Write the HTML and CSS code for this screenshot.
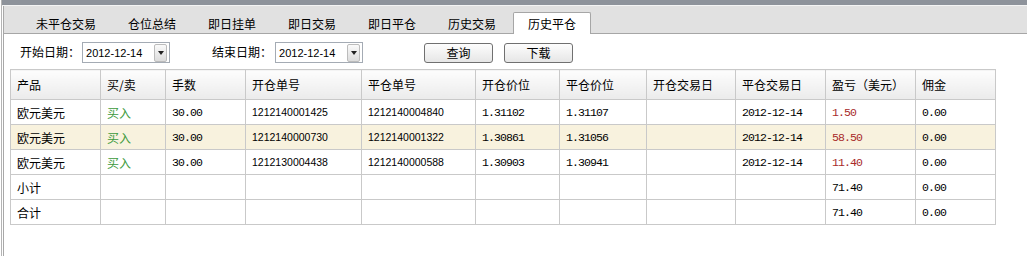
FILE: index.html
```html
<!DOCTYPE html>
<html lang="zh">
<head>
<meta charset="utf-8">
<title>历史平仓</title>
<link rel="stylesheet" href="styles.css">
</head>
<body>
<div class="frame">
  <div class="topbar"></div>
  <div class="tabs">
    <div class="tab">未平仓交易</div>
    <div class="tab">仓位总结</div>
    <div class="tab">即日挂单</div>
    <div class="tab">即日交易</div>
    <div class="tab">即日平仓</div>
    <div class="tab">历史交易</div>
    <div class="tab active">历史平仓</div>
  </div>
  <div class="filters">
    <span class="label">开始日期：</span>
    <div class="select"><span class="sel-text">2012-12-14</span><span class="sel-btn"><span class="tri"></span></span></div>
    <span class="label label2">结束日期：</span>
    <div class="select select2"><span class="sel-text">2012-12-14</span><span class="sel-btn"><span class="tri"></span></span></div>
    <button class="btn btn-query">查询</button>
    <button class="btn btn-down">下载</button>
  </div>
  <table class="grid">
    <colgroup>
      <col class="c1"><col class="c2"><col class="c3"><col class="c4"><col class="c5"><col class="c6"><col class="c7"><col class="c8"><col class="c9"><col class="c10"><col class="c11">
    </colgroup>
    <thead>
      <tr>
        <th>产品</th><th>买/卖</th><th>手数</th><th>开仓单号</th><th>平仓单号</th><th>开仓价位</th><th>平仓价位</th><th>开仓交易日</th><th>平仓交易日</th><th>盈亏（美元）</th><th>佣金</th>
      </tr>
    </thead>
    <tbody>
      <tr>
        <td>欧元美元</td><td class="buy">买入</td><td class="num">30.00</td><td class="id">1212140001425</td><td class="id">1212140004840</td><td class="num">1.31102</td><td class="num">1.31107</td><td></td><td class="num">2012-12-14</td><td class="num red">1.50</td><td class="num">0.00</td>
      </tr>
      <tr class="hl">
        <td>欧元美元</td><td class="buy">买入</td><td class="num">30.00</td><td class="id">1212140000730</td><td class="id">1212140001322</td><td class="num">1.30861</td><td class="num">1.31056</td><td></td><td class="num">2012-12-14</td><td class="num red">58.50</td><td class="num">0.00</td>
      </tr>
      <tr>
        <td>欧元美元</td><td class="buy">买入</td><td class="num">30.00</td><td class="id">1212130004438</td><td class="id">1212140000588</td><td class="num">1.30903</td><td class="num">1.30941</td><td></td><td class="num">2012-12-14</td><td class="num red">11.40</td><td class="num">0.00</td>
      </tr>
      <tr>
        <td>小计</td><td></td><td></td><td></td><td></td><td></td><td></td><td></td><td></td><td class="num">71.40</td><td class="num">0.00</td>
      </tr>
      <tr>
        <td>合计</td><td></td><td></td><td></td><td></td><td></td><td></td><td></td><td></td><td class="num">71.40</td><td class="num">0.00</td>
      </tr>
    </tbody>
  </table>
</div>
</body>
</html>
```

FILE: styles.css
```css
html, body {
  margin: 0;
  padding: 0;
  background: #ffffff;
}

body {
  font-family: "Noto Sans CJK SC", "Liberation Sans", sans-serif;
  font-size: 12px;
  color: #000;
  width: 1027px;
  height: 256px;
  overflow: hidden;
}

.frame {
  height: 256px;
  border-left: 1px solid #b4b4b4;
  margin-left: 1px;
  box-shadow: inset 1px 0 0 #ffffff, inset 2px 0 0 #a8a8a8;
}

.topbar {
  height: 5px;
  background: #8e939b;
  border-bottom: 1px solid #f4f4f4;
}

.tabs {
  height: 27px;
  background: #e1e1e1;
  border-bottom: 1px solid #a6a6a6;
  display: flex;
  align-items: flex-end;
  gap: 2px;
  padding-left: 17px;
  margin-left: 2px;
}

.tab {
  height: 21px;
  line-height: 22px;
  padding: 0 14px;
  position: relative;
  top: 1px;
  border: 1px solid transparent;
  border-bottom: none;
}

.tab.active {
  background: #ffffff;
  border-color: #a6a6a6;
  border-radius: 2px 2px 0 0;
  height: 21px;
}

.filters {
  display: flex;
  align-items: center;
  height: 35px;
  padding-left: 16px;
  margin-left: 2px;
}

.label {
  line-height: 20px;
  position: relative;
  top: 0;
}

.label2 {
  margin-left: 42px;
}

.select {
  margin-left: 2px;
  width: 86px;
  height: 19px;
  border: 1px solid #a4abb4;
  background: #fff;
  display: flex;
  align-items: center;
  justify-content: space-between;
  position: relative;
  top: 1px;
}

.select2 {
  margin-left: 3px;
}

.sel-text {
  font-family: "Liberation Sans", Arial, sans-serif;
  font-size: 11px;
  padding-left: 3px;
}

.sel-btn {
  width: 11px;
  height: 16px;
  margin-right: 2px;
  border: 1px solid #bcbcbc;
  border-radius: 2px;
  background: linear-gradient(#fafafa, #dcdcdc);
  display: flex;
  align-items: center;
  justify-content: center;
}

.tri {
  width: 0;
  height: 0;
  border-left: 3.5px solid transparent;
  border-right: 3.5px solid transparent;
  border-top: 4px solid #222;
}

.btn {
  font-family: "Noto Sans CJK SC", sans-serif;
  font-size: 12px;
  width: 69px;
  height: 20px;
  padding: 0;
  line-height: 18px;
  border: 1px solid #707070;
  border-radius: 3px;
  background: linear-gradient(#fdfdfd, #e6e6e6);
  color: #000;
  position: relative;
  top: 1px;
}

.btn-query {
  margin-left: 61px;
}

.btn-down {
  margin-left: 11px;
}

.grid {
  margin-left: 8px;
  border-collapse: collapse;
  table-layout: fixed;
  width: 985px;
}

.c1 { width: 90px; }
.c2 { width: 65px; }
.c3 { width: 80px; }
.c4 { width: 116px; }
.c5 { width: 114px; }
.c6 { width: 84px; }
.c7 { width: 87px; }
.c8 { width: 89px; }
.c9 { width: 90px; }
.c10 { width: 90px; }
.c11 { width: 80px; }

.grid th,
.grid td {
  border: 1px solid #c9c9c9;
  padding: 0 0 0 6px;
  text-align: left;
  white-space: nowrap;
  overflow: hidden;
}

.grid th {
  height: 29px;
  font-weight: normal;
  background: linear-gradient(#fdfdfd, #ebebeb);
}

.grid td {
  height: 24px;
}

.grid tr.hl td {
  background: #f8f2de;
}

.num {
  font-family: "Liberation Mono", monospace;
  font-size: 11.5px;
  letter-spacing: -0.9px;
}

.id {
  font-family: "Liberation Sans", Arial, sans-serif;
  font-size: 10.5px;
}

.buy {
  color: #3c9a3c;
}

.red {
  color: #a82a2a;
}
```
